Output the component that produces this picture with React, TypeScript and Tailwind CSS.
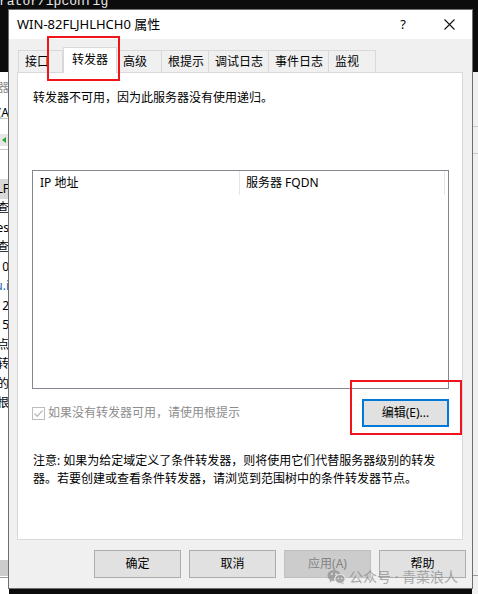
import React from "react";

const FONT = { fontFamily: '"Noto Sans", "Noto Sans CJK SC", sans-serif' };

function Check() {
  return (
    <svg width="13" height="13" viewBox="0 0 13 13" className="shrink-0">
      <rect x="0.5" y="0.5" width="12" height="12" fill="#fff" stroke="#bcbcbc" />
      <path d="M2.5 6.5 L5.2 9.2 L10.5 3.5" fill="none" stroke="#bcbcbc" strokeWidth="1.3" />
    </svg>
  );
}

function WeChat() {
  return (
    <svg width="19" height="16" viewBox="0 0 19 16">
      <ellipse cx="7" cy="6.5" rx="6.5" ry="5.5" fill="#8c8c8c" />
      <path d="M3 10.5 L2.5 13.5 L6 11.5 Z" fill="#8c8c8c" />
      <ellipse cx="13" cy="10" rx="5.2" ry="4.5" fill="#8c8c8c" stroke="#f0f0f0" strokeWidth="1.2" />
      <path d="M16 13.5 L17 15.5 L14 14 Z" fill="#8c8c8c" />
      <circle cx="4.8" cy="5" r="0.9" fill="#f0f0f0" />
      <circle cx="9" cy="5" r="0.9" fill="#f0f0f0" />
      <circle cx="11.3" cy="9.3" r="0.7" fill="#f0f0f0" />
      <circle cx="14.7" cy="9.3" r="0.7" fill="#f0f0f0" />
    </svg>
  );
}

const tabs = [
  { label: "接口", w: 45 },
  { label: "转发器", w: 54, active: true },
  { label: "高级", w: 45 },
  { label: "根提示", w: 47 },
  { label: "调试日志", w: 60 },
  { label: "事件日志", w: 60 },
  { label: "监视", w: 47 },
];

const leftRows = [
  { t: "LF", bg: true },
  { t: "查" },
  { t: "es" },
  { t: "查" },
  { t: "0" },
  { t: "u.i", blue: true },
  { t: "2" },
  { t: "5" },
  { t: "点" },
  { t: "转" },
  { t: "的" },
  { t: "根" },
];

export default function App() {
  return (
    <div className="relative w-[478px] h-[594px] overflow-hidden bg-[#0c0c0c] text-[12px] text-black" style={FONT}>
      {/* console text behind */}
      <div className="absolute left-[-1px] top-[-6px] whitespace-nowrap text-[13px] leading-[16px] text-[#e8e8e8]" style={{ fontFamily: '"Liberation Mono", monospace' }}>
        rator/ipconfig
      </div>

      {/* left background window strip */}
      <div className="absolute left-0 top-[72px] w-[9px] h-[522px] overflow-hidden bg-white">
        <div className="absolute right-0 top-[8px] whitespace-nowrap text-right text-[#8a8a8a] leading-[16px]">服务器</div>
        <div className="absolute right-0 top-[33px] whitespace-nowrap text-right leading-[16px]">用(A</div>
        <div className="absolute left-0 top-[46px] w-full h-[1px] bg-[#c8c8c8]" />
        <div className="absolute left-0 top-[62px] w-full h-[12px] bg-[#e6e6e6]" />
        <div className="absolute left-[2px] top-[65px] w-0 h-0 border-y-[3px] border-y-transparent border-r-[4px] border-r-[#2fa52f]" />
        <div className="absolute left-0 top-[77px] w-full h-[1px] bg-[#c8c8c8]" />
        <div className="absolute left-0 top-[107px] w-full flex flex-col">
          {leftRows.map((r, i) => (
            <div
              key={i}
              className={`h-[19.5px] flex items-center justify-end whitespace-nowrap leading-[16px] ${r.bg ? "bg-[#d9d9d9]" : ""} ${r.blue ? "text-[#1a5fb4]" : ""}`}
            >
              {r.t}
            </div>
          ))}
        </div>
        <div className="absolute left-0 top-[488px] w-full h-[16px] bg-[#cccccc]" />
        <div className="absolute left-0 top-[505px] w-full h-[1px] bg-[#9a9a9a]" />
      </div>

      {/* right background strip */}
      <div className="absolute right-0 top-[72px] w-[6px] h-[522px] bg-[#f0f0f0]">
        <div className="absolute left-0 top-[54px] w-full h-[1px] bg-[#c8c8c8]" />
        <div className="absolute left-0 top-[81px] w-full h-[1px] bg-[#c8c8c8]" />
        <div className="absolute left-0 top-[503px] w-full h-[1px] bg-[#9a9a9a]" />
      </div>

      {/* dialog window */}
      <div className="absolute left-[8px] top-[9px] w-[465px] h-[580px] bg-[#f0f0f0] border border-[#6f6f6f] flex flex-col">
        {/* title bar */}
        <div className="h-[29px] bg-white flex items-center pl-[8px] shrink-0">
          <div className="text-[13px] leading-[16px] mt-[-2px]">WIN-82FLJHLHCH0 属性</div>
          <div className="ml-auto flex items-center">
            <div className="w-[46px] text-center text-[13px] leading-[16px] mt-[-2px]">?</div>
            <div className="w-[46px] flex justify-center mt-[-1px]">
              <svg width="11" height="11" viewBox="0 0 11 11">
                <path d="M0.5 0.5 L10.5 10.5 M10.5 0.5 L0.5 10.5" stroke="#111" strokeWidth="1.1" />
              </svg>
            </div>
          </div>
        </div>

        {/* tabs */}
        <div className="flex items-end pl-[9px] pt-[8px] h-[33px] shrink-0">
          {tabs.map((t) =>
            t.active ? (
              <div
                key={t.label}
                className="relative z-10 h-[26px] mb-[-1px] bg-white border border-b-0 border-[#d9d9d9] flex items-start justify-center pt-[4px] leading-[16px]"
                style={{ width: t.w }}
              >
                {t.label}
              </div>
            ) : (
              <div
                key={t.label}
                className="h-[22px] bg-[#f0f0f0] border border-b-0 border-l-0 first:border-l border-[#d9d9d9] flex items-center pl-[6px] leading-[16px]"
                style={{ width: t.w }}
              >
                {t.label}
              </div>
            )
          )}
        </div>

        {/* panel */}
        <div className="ml-[8px] w-[446px] h-[468px] bg-white border border-[#d9d9d9] flex flex-col pl-[14px] pr-[13px] pt-[17px] shrink-0">
          <div className="leading-[16px] pl-[1px]">转发器不可用，因为此服务器没有使用递归。</div>

          <div className="mt-[64px] w-[417px] h-[219px] border border-[#828790] bg-white flex flex-col">
            <div className="flex h-[24px] items-center">
              <div className="w-[207px] pl-[7px] leading-[16px] border-r border-[#e5e5e5] h-full flex items-center">IP 地址</div>
              <div className="w-[205px] pl-[6px] leading-[16px] border-r border-[#e5e5e5] h-full flex items-center">服务器 FQDN</div>
            </div>
          </div>

          <div className="mt-[10px] flex items-center w-[417px]">
            <Check />
            <div className="ml-[3px] text-[#8d8d8d] leading-[16px]">如果没有转发器可用，请使用根提示</div>
            <div className="ml-auto w-[87px] h-[28px] bg-[#e1e1e1] border-2 border-[#0078d7] flex items-center justify-center leading-[16px]">
              编辑(E)...
            </div>
          </div>

          <div className="mt-[25px] leading-[18px] pl-[1px]">
            <div>注意: 如果为给定域定义了条件转发器，则将使用它们代替服务器级别的转发</div>
            <div>器。若要创建或查看条件转发器，请浏览到范围树中的条件转发器节点。</div>
          </div>
        </div>

        {/* buttons */}
        <div className="mt-[10px] flex justify-end gap-[8px] pr-[6px]">
          <div className="w-[87px] h-[28px] bg-[#e1e1e1] border border-[#adadad] flex items-center justify-center leading-[16px]">确定</div>
          <div className="w-[87px] h-[28px] bg-[#e1e1e1] border border-[#adadad] flex items-center justify-center leading-[16px]">取消</div>
          <div className="w-[87px] h-[28px] bg-[#cccccc] border border-[#bfbfbf] flex items-center justify-center leading-[16px] text-[#838383]">应用(A)</div>
          <div className="w-[87px] h-[28px] bg-[#e1e1e1] border border-[#adadad] flex items-center justify-center leading-[16px]">帮助</div>
        </div>
      </div>

      {/* watermark */}
      <div className="absolute left-[327px] top-[568px] flex items-center gap-[3px] opacity-70">
        <WeChat />
        <div className="text-[14px] leading-[18px] text-[#8a8a8a] whitespace-nowrap">公众号 · 青菜浪人</div>
      </div>

      {/* red annotation boxes */}
      <div className="absolute left-[47px] top-[36px] w-[73px] h-[45px] border-[2.5px] border-[#f2141c]" />
      <div className="absolute left-[350px] top-[380px] w-[112px] h-[55px] border-[2.5px] border-[#f2141c]" />
    </div>
  );
}
